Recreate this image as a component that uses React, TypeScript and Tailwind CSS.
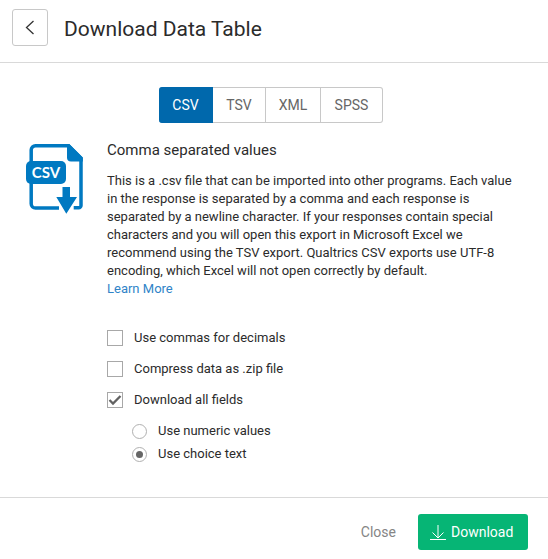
import { useState } from "react";

const formats = [
  { name: "CSV", width: "w-[54px]" },
  { name: "TSV", width: "w-[53px]" },
  { name: "XML", width: "w-[55px]" },
  { name: "SPSS", width: "w-[62px]" },
];

function CsvFileIcon() {
  return (
    <svg viewBox="0 0 60 72" className="h-[72px] w-[60px] shrink-0" aria-hidden="true">
      <path
        d="M5.2 19V7a4.300 4.300 0 0 1 4.300-4.300h33l12.500 12.500v47.300a2.300 2.300 0 0 1-2.300 2.300h-5M33 65H9.500A4.300 4.300 0 0 1 5.200 60.700V40"
        fill="none"
        stroke="#0079c1"
        strokeWidth="3.500"
      />
      <path d="M41 1h2.300l13.500 13.500v4H45a4 4 0 0 1-4-4z" fill="#0079c1" />
      <rect x="0" y="18" width="40" height="23" rx="5" fill="#0079c1" />
      <path d="M36.500 44H44v10h7L40.300 70.700 30.300 54h6.200z" fill="#0079c1" />
      <text x="20" y="35" textAnchor="middle" fill="#fff" className="font-['Lato',sans-serif] text-[15px] font-bold">
        CSV
      </text>
    </svg>
  );
}

function CheckRow({ label, defaultChecked = false }: { label: string; defaultChecked?: boolean }) {
  return (
    <label className="flex h-4 items-center gap-[11px]">
      <span className="relative size-4 shrink-0">
        <input
          type="checkbox"
          defaultChecked={defaultChecked}
          className="peer block size-4 appearance-none border border-[#a8a8a8] bg-white"
        />
        <svg viewBox="0 0 16 16" className="pointer-events-none absolute inset-0 hidden size-4 peer-checked:block" aria-hidden="true">
          <path d="M2.500 8 6 11.500 13.500 4" fill="none" stroke="#626262" strokeWidth="2.300" />
        </svg>
      </span>
      {label}
    </label>
  );
}

function RadioRow({ label, defaultChecked = false }: { label: string; defaultChecked?: boolean }) {
  return (
    <label className="flex h-4 items-center gap-[11px]">
      <span className="relative size-[15px] shrink-0">
        <input
          type="radio"
          name="values"
          defaultChecked={defaultChecked}
          className="peer block size-[15px] appearance-none rounded-full border border-[#b0b0b0] bg-white"
        />
        <span className="pointer-events-none absolute inset-1 hidden rounded-full bg-[#666] peer-checked:block" />
      </span>
      {label}
    </label>
  );
}

export default function App() {
  const [format, setFormat] = useState("CSV");
  return (
    <main className="bg-white font-['Roboto','Liberation_Sans',sans-serif] text-[13px] leading-[18px] text-[#2b2b2b]">
      <header className="flex items-start gap-4 border-b border-[#d9d9d9] px-3 pt-[9px] pb-[13px]">
        <button aria-label="Back" className="flex h-[37px] w-9 items-center justify-center rounded-[3px] border border-[#c8c8c8]">
          <svg viewBox="0 0 10 16" className="h-4 w-[10px]" fill="none" stroke="#333" strokeWidth="1.3" aria-hidden="true">
            <path d="M8.500 1 1.500 7.500l7 6.500" />
          </svg>
        </button>
        <h1 className="text-[21px] leading-10">Download Data Table</h1>
      </header>

      <div className="px-[26px] pt-6 pb-[35px]">
        <div className="flex justify-center pr-[6px]">
          <div className="flex">
            {formats.map(({ name, width }) => (
              <button
                key={name}
                aria-pressed={format === name}
                onClick={() => setFormat(name)}
                className={`${width} h-9 border-y border-r text-sm first:rounded-l-[3px] last:rounded-r-[3px] ${
                  format === name ? "border-[#0068ac] bg-[#0068ac] text-white" : "border-[#c8c8c8] text-[#666]"
                }`}
              >
                {name}
              </button>
            ))}
          </div>
        </div>

        <div className="mt-5 flex gap-[21px]">
          <CsvFileIcon />
          <div className="min-w-0 grow">
            <h2 className="text-[15px] leading-[14px]">Comma separated values</h2>
            <p className="mt-[15px] max-w-[412px]">
              This is a .csv file that can be imported into other programs. Each value in the response is separated by a
              comma and each response is separated by a newline character. If your responses contain special characters
              and you will open this export in Microsoft Excel we recommend using the TSV export. Qualtrics CSV exports
              use UTF-8 encoding, which Excel will not open correctly by default.
            </p>
            <a href="#learn" className="text-[#2f84c8]">
              Learn More
            </a>

            <div className="mt-8 flex flex-col gap-[15px]">
              <CheckRow label="Use commas for decimals" />
              <CheckRow label="Compress data as .zip file" />
              <CheckRow label="Download all fields" defaultChecked />
              <div className="flex flex-col gap-[7px] pl-[25px]">
                <RadioRow label="Use numeric values" />
                <RadioRow label="Use choice text" defaultChecked />
              </div>
            </div>
          </div>
        </div>
      </div>

      <footer className="flex items-center justify-end gap-[22px] border-t border-[#d9d9d9] px-5 pt-4 pb-[9px]">
        <button className="text-sm text-[#858585]">Close</button>
        <button className="flex h-9 w-[110px] items-center gap-[5px] rounded-[3px] bg-[#06b575] pl-3 text-sm text-white">
          <svg viewBox="0 0 16 18" className="h-[18px] w-4" fill="none" stroke="currentColor" aria-hidden="true">
            <path d="M8 2v13M2.500 9.500 8 15l5.500-5.500M0 16.500h16" />
          </svg>
          Download
        </button>
      </footer>
    </main>
  );
}
